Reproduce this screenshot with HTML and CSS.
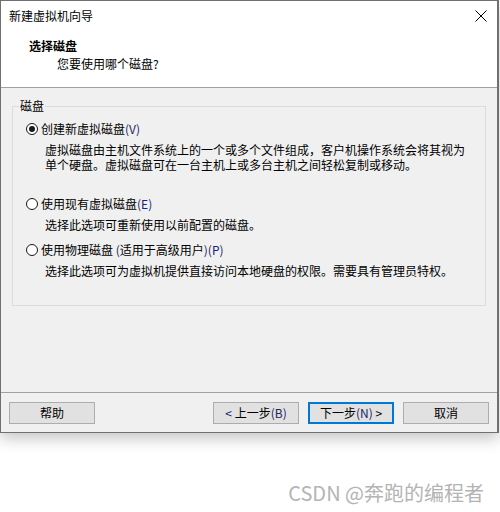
FILE: index.html
```html
<!DOCTYPE html>
<html lang="zh">
<head>
<meta charset="utf-8">
<title>新建虚拟机向导</title>
<link rel="stylesheet" href="styles.css">
</head>
<body>
<div class="window">
  <div class="titlebar">
    <span class="title">新建虚拟机向导</span>
    <svg class="close" width="12" height="12" viewBox="0 0 12 12"><path d="M0.5 0.5 L11.5 11.5 M11.5 0.5 L0.5 11.5" stroke="#000" stroke-width="1" fill="none"/></svg>
  </div>
  <div class="header">
    <div class="h-title">选择磁盘</div>
    <div class="h-sub">您要使用哪个磁盘?</div>
  </div>
  <div class="content">
    <fieldset class="group">
      <legend>磁盘</legend>
      <div class="option first">
        <span class="radio checked"></span>
        <span class="label">创建新虚拟磁盘<span class="mn">(V)</span></span>
      </div>
      <div class="desc">
        <div class="line">虚拟磁盘由主机文件系统上的一个或多个文件组成，客户机操作系统会将其视为</div>
        <div class="line">单个硬盘。虚拟磁盘可在一台主机上或多台主机之间轻松复制或移动。</div>
      </div>
      <div class="option second">
        <span class="radio"></span>
        <span class="label">使用现有虚拟磁盘<span class="mn">(E)</span></span>
      </div>
      <div class="desc"><div class="line">选择此选项可重新使用以前配置的磁盘。</div></div>
      <div class="option third">
        <span class="radio"></span>
        <span class="label">使用物理磁盘 <span class="mn">(</span>适用于高级用户<span class="mn">)(P)</span></span>
      </div>
      <div class="desc"><div class="line">选择此选项可为虚拟机提供直接访问本地硬盘的权限。需要具有管理员特权。</div></div>
    </fieldset>
  </div>
  <div class="footer">
    <button class="btn">帮助</button>
    <div class="spacer"></div>
    <button class="btn"><span class="mn">&lt;</span> 上一步<span class="mn">(B)</span></button>
    <button class="btn default">下一步<span class="mn">(N)</span> &gt;</button>
    <button class="btn">取消</button>
  </div>
</div>
<div class="watermark">CSDN @奔跑的编程者</div>
</body>
</html>
```

FILE: styles.css
```css
html, body {
  margin: 0;
  padding: 0;
  background: #ffffff;
}
body {
  width: 500px;
  height: 512px;
  font-family: "Noto Sans CJK SC", "Microsoft YaHei", sans-serif;
  font-size: 12px;
  color: #000;
}
.window {
  width: 499px;
  box-sizing: border-box;
  border: 1px solid #707070;
  border-right-width: 2px;
  background: #f0f0f0;
  display: flex;
  flex-direction: column;
  box-shadow: 0 6px 14px rgba(0,0,0,0.22);
}
.titlebar {
  height: 29px;
  background: #fff;
  display: flex;
  align-items: center;
  padding: 0 10px 0 8px;
  justify-content: space-between;
}
.title {
  line-height: 16px;
  margin-top: 1px;
}
.close {
  display: block;
  margin-top: 1px;
}
.header {
  height: 57px;
  background: #fff;
  border-bottom: 1px solid #a0a0a0;
  box-sizing: content-box;
}
.h-title {
  font-weight: bold;
  line-height: 16px;
  padding: 8px 0 0 28px;
}
.h-sub {
  line-height: 16px;
  padding: 2px 0 0 56px;
}
.content {
  height: 304px;
  padding: 10px 11px 0 11px;
  box-sizing: border-box;
}
.group {
  margin: 0;
  border: 1px solid #dcdcdc;
  padding: 0 0 0 13px;
  height: 208px;
  box-sizing: border-box;
}
.group legend {
  padding: 0 1px;
  margin-left: -7px;
  line-height: 16px;
}
.option {
  display: flex;
  align-items: center;
  height: 16px;
  line-height: 16px;
}
.option.first { margin-top: 7px; }
.option.second { margin-top: 24px; }
.option.third { margin-top: 10px; }
.radio {
  width: 12px;
  height: 12px;
  box-sizing: border-box;
  border: 1px solid #1a1a1a;
  border-radius: 50%;
  background: #fff;
  margin-right: 3px;
  display: flex;
  align-items: center;
  justify-content: center;
}
.radio.checked::after {
  content: "";
  width: 6px;
  height: 6px;
  border-radius: 50%;
  background: #1a1a1a;
}
.mn {
  color: #1c2466;
}
.desc {
  padding-left: 19px;
  margin-top: 5px;
}
.line {
  height: 15px;
  line-height: 15px;
  overflow: visible;
  white-space: nowrap;
}
.footer {
  height: 40px;
  border-top: 1px solid #a0a0a0;
  display: flex;
  align-items: flex-start;
  padding: 9px 8px 0 8px;
  box-sizing: border-box;
  gap: 9px;
}
.spacer { flex: 1; }
.btn {
  width: 86px;
  height: 22px;
  box-sizing: border-box;
  border: 1px solid #adadad;
  background: #e1e1e1;
  font-family: inherit;
  font-size: 12px;
  line-height: 18px;
  padding: 0;
  color: #000;
}
.btn.default {
  border: 2px solid #0078d7;
}
.watermark {
  text-align: right;
  padding-right: 16px;
  margin-top: 48px;
  font-family: "Noto Sans CJK SC", sans-serif;
  font-size: 20px;
  line-height: 24px;
  color: #b4b4b4;
}
```
